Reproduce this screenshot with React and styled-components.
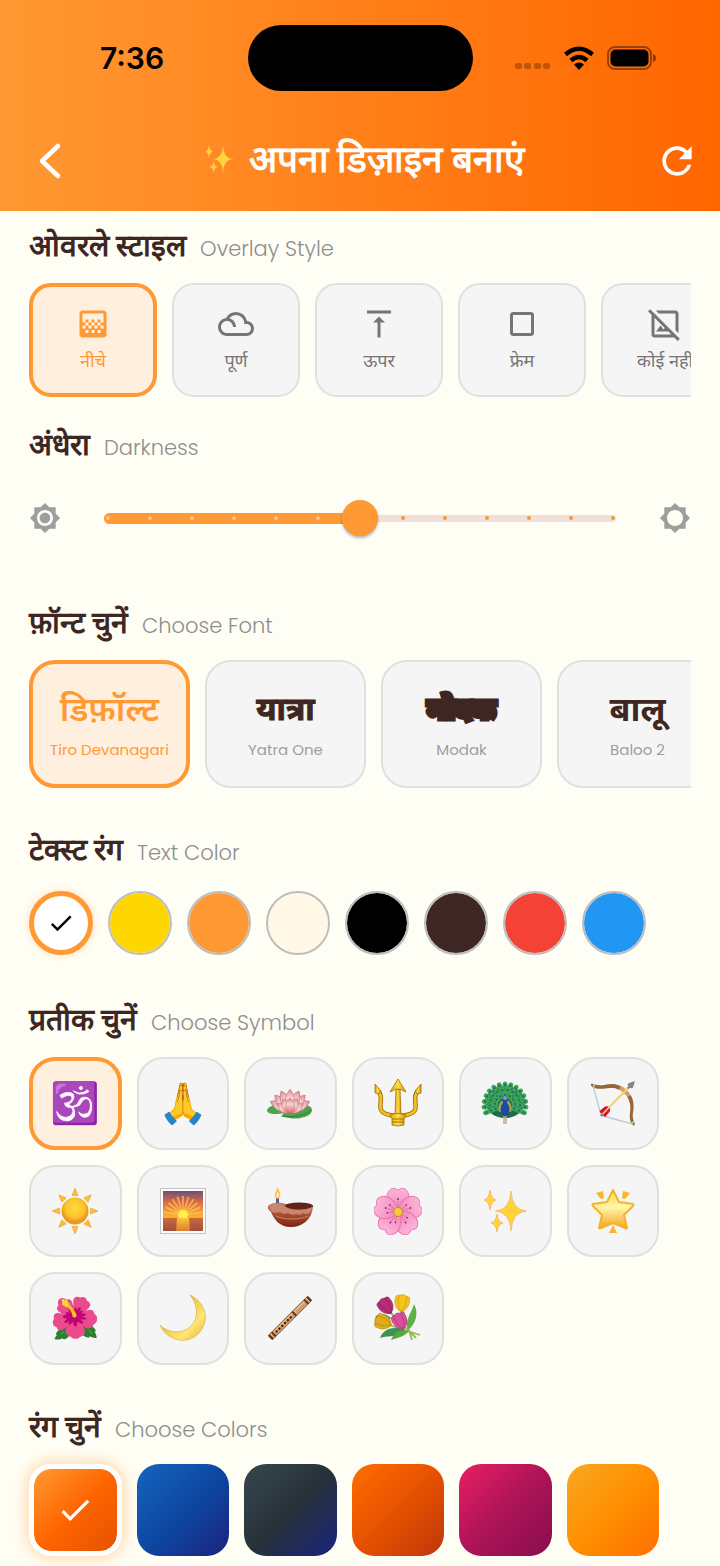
import React, { useState } from "react";
import styled, { createGlobalStyle } from "styled-components";
import {
  MdGradient,
  MdFilterDrama,
  MdVerticalAlignTop,
  MdCropSquare,
  MdOutlineImageNotSupported,
  MdBrightnessHigh,
  MdBrightnessLow,
  MdRefresh,
  MdCheck,
} from "react-icons/md";

const GlobalStyle = createGlobalStyle`
  * {
    box-sizing: border-box;
  }

  body {
    margin: 0;
    background: #fffef5;
    font-family: Poppins, Inter, sans-serif;
  }

  button {
    font: inherit;
    cursor: pointer;
  }
`;

/*///Header///*/
const StyledHeader = styled.header`
  padding: 25px 0 0;
  background: linear-gradient(90deg, #ff9933, #ff6600);
`;

const StatusBar = styled.div`
  display: grid;
  grid-template-columns: 1fr auto 1fr;
  align-items: center;
`;

const Clock = styled.span`
  padding-left: 100px;
  font-family: Inter, sans-serif;
  font-size: 30px;
  font-weight: 600;
  color: #000;
`;

const Island = styled.div`
  width: 225px;
  height: 66px;
  border-radius: 33px;
  background: #000;
`;

const StatusIcons = styled.div`
  display: flex;
  justify-content: flex-end;
  align-items: center;
  gap: 12px;
  padding-right: 63px;
`;

const TitleBar = styled.div`
  display: grid;
  grid-template-columns: 44px 1fr 44px;
  align-items: center;
  height: 120px;
  padding: 20px 21px 0 28px;
`;

const IconButton = styled.button`
  display: flex;
  align-items: center;
  justify-content: center;
  width: 44px;
  height: 44px;
  padding: 0;
  border: none;
  background: none;
  color: #fff;
`;

const Title = styled.h1`
  display: flex;
  align-items: center;
  justify-content: center;
  gap: 14px;
  margin: 0;
  padding-bottom: 4px;
  font-family: Inter, sans-serif;
  font-size: 37px;
  line-height: 48px;
  font-weight: 700;
  color: #fff;
`;

/*///Sections///*/
const StyledMain = styled.main`
  display: flex;
  flex-direction: column;
  padding: 16px 29px 9px;
`;

const Section = styled.section`
  display: flex;
  flex-direction: column;
  gap: ${(p) => p.$gap || 20}px;
  margin-bottom: ${(p) => p.$space || 0}px;
`;

const StyledHeading = styled.h2`
  display: flex;
  align-items: baseline;
  gap: 14px;
  height: 36px;
  margin: 0;
  font-family: Inter, sans-serif;
  font-size: 30px;
  line-height: 36px;
  font-weight: 700;
  color: #3e2723;
`;

const Sub = styled.span`
  font-family: Poppins, Inter, sans-serif;
  font-size: 21px;
  font-weight: 300;
  color: #8e8e8e;
`;

const ScrollRow = styled.div`
  display: flex;
  gap: 15px;
  overflow: hidden;
`;

const Card = styled.button`
  flex: none;
  display: flex;
  flex-direction: column;
  align-items: center;
  justify-content: center;
  padding: 0;
  border: ${(p) => (p.$active ? "4px solid #ff9933" : "2px solid #e0e0e0")};
  background: ${(p) => (p.$active ? "#ffefdf" : "#f5f5f5")};
`;

const OverlayCard = styled(Card)`
  gap: 4px;
  width: 128px;
  height: 114px;
  border-radius: 22px;
  font-family: "Noto Sans", sans-serif;
  font-size: 18px;
  line-height: 28px;
  white-space: nowrap;
  color: ${(p) => (p.$active ? "#ff9933" : "#757575")};
`;

const FontCard = styled(Card)`
  gap: 8px;
  width: 161px;
  height: 128px;
  border-radius: 26px;
`;

const FontSample = styled.span`
  font-family: "Noto Sans", sans-serif;
  font-size: ${(p) => p.$size}px;
  line-height: 44px;
  font-weight: ${(p) => p.$weight};
  -webkit-text-stroke: ${(p) => p.$stroke || 0}px currentColor;
  color: ${(p) => (p.$active ? "#ff9933" : "#3e2723")};
`;

const FontName = styled.span`
  font-size: 15px;
  line-height: 24px;
  font-weight: 400;
  color: ${(p) => (p.$active ? "#ff9933" : "#9e9e9e")};
`;

/*///Slider///*/
const SliderRow = styled.div`
  display: flex;
  align-items: center;
  justify-content: space-between;
  gap: 43px;
  height: 88px;
  color: #9e9e9e;
`;

const SliderBox = styled.div`
  flex: 1;
  display: grid;
  align-items: center;

  > * {
    grid-area: 1 / 1;
  }
`;

const Track = styled.div`
  display: flex;
  align-items: center;
`;

const Filled = styled.div`
  height: 11px;
  border-radius: 6px 0 0 6px;
  background: #ff9933;
`;

const Rest = styled.div`
  flex: 1;
  height: 7px;
  border-radius: 0 4px 4px 0;
  background: #f2e0d7;
`;

const Ticks = styled.div`
  display: flex;
  justify-content: space-between;
  padding: 0 1px 0 2px;
`;

const Tick = styled.i`
  width: 4px;
  height: 4px;
  border-radius: 50%;
  background: ${(p) => (p.$on ? "#ffc58c" : "#f09a3c")};
`;

const Range = styled.input`
  width: 100%;
  height: 48px;
  margin: 0;
  appearance: none;
  background: none;

  &::-webkit-slider-thumb {
    appearance: none;
    width: 36px;
    height: 36px;
    border-radius: 50%;
    background: #ff9933;
    box-shadow: 0 2px 3px rgba(0, 0, 0, 0.3);
  }
`;

/*///Text colour///*/
const Dots = styled.div`
  display: flex;
  gap: 15px;
`;

const Dot = styled.button`
  display: flex;
  align-items: center;
  justify-content: center;
  width: 64px;
  height: 64px;
  padding: 0;
  border: ${(p) => (p.$active ? "5px solid #ff9933" : "2px solid #bdbdbd")};
  border-radius: 50%;
  background: ${(p) => p.$color};
  background-clip: padding-box;
  box-shadow: ${(p) => (p.$active ? "0 0 8px rgba(255, 153, 51, 0.3)" : "none")};
  color: #000;
`;

/*///Symbols and gradients///*/
const TileGrid = styled.div`
  display: grid;
  grid-template-columns: repeat(6, 1fr);
  gap: 15px;
  padding-right: 32px;
`;

const SymbolTile = styled(Card)`
  aspect-ratio: 1;
  border-radius: 26px;
  font-size: 40px;
  line-height: 48px;
`;

const Swatch = styled.button`
  display: flex;
  align-items: center;
  justify-content: center;
  aspect-ratio: 1;
  padding: 0;
  border: ${(p) => (p.$active ? "5px solid #fff" : "none")};
  border-radius: 22px;
  background: linear-gradient(135deg, ${(p) => p.$colors}) padding-box;
  box-shadow: ${(p) => (p.$active ? "0 0 15px 2px rgba(255, 153, 51, 0.4)" : "none")};
  color: #fff;
`;

const around = (n) => Array.from({ length: n }, (_, i) => (i * 360) / n);

const spark = (x, y, rx, ry) =>
  `M${x} ${y - ry}Q${x + 1} ${y - 1} ${x + rx} ${y}Q${x + 1} ${y + 1} ${x} ${y + ry}Q${x - 1} ${y + 1} ${x - rx} ${y}Q${x - 1} ${y - 1} ${x} ${y - ry}Z`;

function Sparkles({ size = 48 }) {
  return (
    <svg width={size} height={size} viewBox="0 0 48 48" fill="#ffd43b" stroke="#f9a65a" strokeWidth="0.7">
      <path d={spark(30, 24, 15.5, 20)} />
      <path d={spark(9, 13, 6, 10)} />
      <path d={spark(16, 36, 6, 9)} />
    </svg>
  );
}

function Lotus() {
  const petal = "M0 0C-7 -6 -6 -16 0 -23C6 -16 7 -6 0 0Z";
  return (
    <svg width="48" height="48" viewBox="0 0 48 48">
      <defs>
        <linearGradient id="petal" x1="0" y1="0" x2="0" y2="1">
          <stop offset="0" stopColor="#d98a90" />
          <stop offset="0.4" stopColor="#f8d5d3" />
          <stop offset="1" stopColor="#e06a74" />
        </linearGradient>
      </defs>
      <path d="M1 31C3 26 14 24 24 25C36 24 46 26 46 31C46 37 36 40 26 39.500L15 37.500L18 34C8 36 1 35 1 31Z" fill="#4fa34a" />
      <path d="M17 37C28 39 41 36 45 31" fill="none" stroke="#2f7d38" />
      <g fill="url(#petal)" stroke="#b9666c" strokeWidth="0.6">
        {[-64, 64, -44, 44, -24, 24, 0].map((a) => (
          <path key={a} d={petal} transform={`translate(24 32) rotate(${a}) scale(.95)`} />
        ))}
        {[-55, 55, -28, 28].map((a) => (
          <path key={a} d={petal} transform={`translate(24 34) rotate(${a}) scale(.8 .7)`} />
        ))}
        <path d={petal} transform="translate(24 34) scale(.9 .65)" />
      </g>
    </svg>
  );
}

function Trident() {
  return (
    <svg width="48" height="48" viewBox="0 0 48 48">
      <defs>
        <linearGradient id="gold" x1="0" y1="0" x2="1" y2="0">
          <stop offset="0" stopColor="#e3a50b" />
          <stop offset="0.5" stopColor="#ffdc45" />
          <stop offset="1" stopColor="#d0920a" />
        </linearGradient>
      </defs>
      <path d="M3 11C14 20 -4 33 18 36.500H30C52 33 34 20 45 11" fill="none" stroke="#a46d05" strokeWidth="4.500" />
      <path d="M3 11C14 20 -4 33 18 36.500H30C52 33 34 20 45 11" fill="none" stroke="#f2bf22" strokeWidth="2.800" />
      <g fill="url(#gold)" stroke="#a46d05" strokeWidth="0.8">
        <path d="M22 10H26L27 36H21Z" />
        <path d="M24 0L32 13Q27 10 24 10Q21 10 16 13Z" />
        <path d="M1 5L7 12L5 15L1 14Z" />
        <path d="M47 5L41 12L43 15L47 14Z" />
        <path d="M16 36C22 34 26 34 32 36L30 40V46Q24 48 18 46V40Z" />
      </g>
      <path d="M18 40H30M18 43H30" stroke="#a46d05" />
    </svg>
  );
}

function Peacock() {
  return (
    <svg width="48" height="48" viewBox="0 0 48 48">
      <ellipse cx="24" cy="23" rx="20" ry="16" fill="#1f6b4f" />
      {[
        [20, 15],
        [15, 12],
        [10, 9],
      ].map(([r, n]) =>
        Array.from({ length: n }, (_, i) => {
          const a = -112 + (i * 224) / (n - 1);
          return (
            <g key={`${r}-${i}`} transform={`translate(24 26) rotate(${a}) translate(0 ${-r})`}>
              <ellipse rx="2.500" ry="3.500" fill="#3fa653" />
              <circle r="1.200" fill="#176b7c" />
            </g>
          );
        })
      )}
      <path d="M20 22Q16 28 18 33H30Q32 28 28 22Z" fill="#a3a83d" />
      <path d="M24 17C27 17 27 20 26 24C30 29 29 36 24 37C19 36 18 29 22 24C21 20 21 17 24 17Z" fill="#1f48a8" />
      <circle cx="24" cy="19" r="2" fill="#7fa3b8" />
      <path d="M23 37V45M25 37V45" stroke="#c9a688" strokeWidth="1.500" />
    </svg>
  );
}

function Sun() {
  return (
    <svg width="48" height="48" viewBox="0 0 48 48">
      <defs>
        <radialGradient id="sun" cx="0.5" cy="0.4">
          <stop offset="0" stopColor="#ffd93b" />
          <stop offset="0.7" stopColor="#fcc42c" />
          <stop offset="1" stopColor="#e9981d" />
        </radialGradient>
      </defs>
      <circle cx="24" cy="24" r="13.500" fill="url(#sun)" />
      {around(8).map((a) => (
        <path key={a} d="M24 1L27 8.500H21Z" fill="#fbbf2f" stroke="#e5a030" strokeWidth="0.6" transform={`rotate(${a} 24 24)`} />
      ))}
    </svg>
  );
}

function Sunrise() {
  return (
    <svg width="48" height="48" viewBox="0 0 48 48">
      <defs>
        <linearGradient id="sky" x1="0" y1="0" x2="0" y2="1">
          <stop offset="0" stopColor="#6b4f78" />
          <stop offset="0.3" stopColor="#e26d45" />
          <stop offset="0.66" stopColor="#ffb52c" />
          <stop offset="0.68" stopColor="#c9683c" />
          <stop offset="1" stopColor="#a04f3f" />
        </linearGradient>
        <linearGradient id="glow" x1="0" y1="0" x2="0" y2="1">
          <stop offset="0" stopColor="#ffc53a" />
          <stop offset="1" stopColor="#dd7a33" />
        </linearGradient>
      </defs>
      <rect x="1.500" y="1.500" width="45" height="45" fill="#fff" stroke="#c4c4c4" />
      <rect x="4" y="4" width="40" height="40" fill="url(#sky)" />
      {[-82, -66, -50, -34, -17, 0, 17, 34, 50, 66, 82].map((a) => (
        <path key={a} d="M23.500 28L23 9H25L24.500 28Z" fill="#ffd65a" opacity="0.6" transform={`rotate(${a} 24 28)`} />
      ))}
      <circle cx="24" cy="28" r="5" fill="#fff04d" />
      <path d="M4 31H44V34H4Z" fill="#c9683c" opacity="0.8" />
      <path d="M18 31H30L31 44H17Z" fill="url(#glow)" />
    </svg>
  );
}

function Diya() {
  return (
    <svg width="48" height="48" viewBox="0 0 48 48">
      <defs>
        <linearGradient id="clay" x1="0" y1="0" x2="0" y2="1">
          <stop offset="0" stopColor="#c47a5e" />
          <stop offset="0.5" stopColor="#a84b32" />
          <stop offset="1" stopColor="#7e2412" />
        </linearGradient>
      </defs>
      <path d="M2 19C6 15 14 15 20 17L47 19C46 33 36 40 25 40C13 40 8 32 5 25Q1 22 2 19Z" fill="url(#clay)" />
      <ellipse cx="33" cy="19" rx="14" ry="3.500" fill="#5f2415" />
      <path d="M3 19C9 14 16 17 20 20C25 24 39 24 46 20Q46 25 43 26Q40 28 37 26Q34 29 30 27Q26 29 22 26Q17 28 14 25Q8 27 5 24Z" fill="#c98570" />
      <path d="M10 29C18 33 34 33 42 29" fill="none" stroke="#d79a84" strokeWidth="0.8" />
      <path d="M10 10H13L13 16H10Z" fill="#5d5a8a" />
      <path d="M11.500 0C14 5 15 7 14 10C13 12 10 12 9 10C8 7 10 5 11.500 0Z" fill="#ffc34d" />
      <path d="M11.500 5C13 8 13 9 11.500 11C10 9 10 8 11.500 5Z" fill="#fff3c2" />
    </svg>
  );
}

function Blossom() {
  return (
    <svg width="48" height="48" viewBox="0 0 48 48">
      <defs>
        <linearGradient id="pink" x1="0" y1="0" x2="0" y2="1">
          <stop offset="0" stopColor="#fdb5da" />
          <stop offset="1" stopColor="#f283bb" />
        </linearGradient>
      </defs>
      {around(5).map((a) => (
        <g key={a} transform={`rotate(${a} 24 25)`}>
          <path d="M24 26C15 20 12 8 18 2Q21 0 24 3Q27 0 30 2C36 8 33 20 24 26Z" fill="url(#pink)" stroke="#e675ad" strokeWidth="0.8" transform="translate(24 0) scale(1.2 1) translate(-24 0)" />
          <path d="M24 24V13M24 24L20 15M24 24L28 15" stroke="#e069a3" strokeWidth="0.8" />
          <circle cx="24" cy="12" r="0.9" fill="#7d2b3c" />
          <circle cx="20" cy="15" r="0.8" fill="#7d2b3c" />
          <circle cx="28" cy="15" r="0.8" fill="#7d2b3c" />
        </g>
      ))}
      <circle cx="24" cy="25" r="4.500" fill="#f5c83f" stroke="#c98a20" />
    </svg>
  );
}

function GlowingStar() {
  return (
    <svg width="48" height="48" viewBox="0 0 48 48">
      <defs>
        <linearGradient id="star" x1="0" y1="0" x2="0" y2="1">
          <stop offset="0" stopColor="#ffd84a" />
          <stop offset="0.45" stopColor="#fff6a8" />
          <stop offset="1" stopColor="#f8a21b" />
        </linearGradient>
      </defs>
      <path d="M24 3L30 15L44 17Q45 18 44 19L35 28L38 41Q37 42 36 41L24 36L12 41Q11 42 10 41L13 28L4 19Q3 18 4 17L18 15Z" fill="url(#star)" stroke="#f5b32c" strokeWidth="2" strokeLinejoin="round" />
      <path d="M7 6L14 4L15 11Q13 13 11 11ZM41 6L34 4L33 11Q35 13 37 11ZM24 38L28 46H20Z" fill="#f9b52b" />
    </svg>
  );
}

function Moon() {
  return (
    <svg width="48" height="48" viewBox="0 0 48 48">
      <defs>
        <linearGradient id="moon" x1="0" y1="0" x2="1" y2="1">
          <stop offset="0.4" stopColor="#f0c544" />
          <stop offset="0.7" stopColor="#ffe676" />
          <stop offset="1" stopColor="#e5b02f" />
        </linearGradient>
      </defs>
      <path d="M31 1C42 6 48 17 46 27C43 41 31 48 20 46C10 44 4 38 1 31C9 39 23 41 32 32C40 24 39 11 31 1Z" fill="url(#moon)" stroke="#d9a634" strokeWidth="0.6" />
    </svg>
  );
}

function Flute() {
  return (
    <svg width="48" height="48" viewBox="0 0 48 48">
      <g transform="rotate(-45 24 24)">
        <rect x="-4" y="21" width="56" height="6" rx="2" fill="#cf9d68" stroke="#7b4a2b" strokeWidth="0.8" />
        <path d="M-2 22.500H50" stroke="#eccb9b" />
        <path d="M-3 21V27M1 21V27M30 21V27M47 21V27M51 21V27" stroke="#62301f" strokeWidth="2" />
        {[5, 9, 13, 17, 21, 25].map((x) => (
          <circle key={x} cx={x} cy="24" r="1.200" fill="#3d1b12" />
        ))}
      </g>
    </svg>
  );
}

function Tulip({ x, y, turn, fill, edge }) {
  return (
    <g transform={`translate(${x} ${y}) rotate(${turn})`} fill={fill} stroke={edge} strokeWidth="0.5">
      <path d="M-7 -6Q-4 -9 0 -6Q4 -9 7 -6Q9 5 0 9Q-9 5 -7 -6Z" />
      <path d="M-4 -6Q0 -11 4 -6Q5 2 0 9Q-5 2 -4 -6Z" />
    </g>
  );
}

function Bouquet() {
  return (
    <svg width="48" height="48" viewBox="0 0 48 48">
      <path d="M13 15L42 44M28 14L38 46M12 30L46 41" stroke="#8fbf4a" strokeWidth="1.800" />
      <path d="M40 10C45 19 42 30 34 36C31 26 36 22 40 10Z" fill="#5cb246" />
      <path d="M6 44C10 34 20 32 31 36C24 44 16 41 6 44Z" fill="#3b9350" />
      <path d="M17 46C20 38 27 35 35 37C30 43 25 43 17 46Z" fill="#57a845" />
      <path d="M1 23C6 18 12 20 17 24L12 29Z" fill="#4f9f50" />
      <Tulip x={12} y={12} turn={-35} fill="#b82d78" edge="#7e1751" />
      <Tulip x={28} y={9} turn={8} fill="#f3c51d" edge="#c48d10" />
      <Tulip x={9} y={28} turn={-70} fill="#e0ae1a" edge="#aa7811" />
      <Tulip x={26} y={27} turn={-25} fill="#d94f9c" edge="#9f2e70" />
    </svg>
  );
}

const overlays = [
  { label: "नीचे", Icon: MdGradient },
  { label: "पूर्ण", Icon: MdFilterDrama },
  { label: "ऊपर", Icon: MdVerticalAlignTop },
  { label: "फ्रेम", Icon: MdCropSquare },
  { label: "कोई नहीं", Icon: MdOutlineImageNotSupported },
];

const fonts = [
  { sample: "डिफ़ॉल्ट", name: "Tiro Devanagari", size: 34, weight: 600 },
  { sample: "यात्रा", name: "Yatra One", size: 32, weight: 700, stroke: 1 },
  { sample: "मोदक", name: "Modak", size: 28, weight: 900, stroke: 5 },
  { sample: "बालू", name: "Baloo 2", size: 34, weight: 700 },
];

const textColors = [
  { name: "White", color: "#ffffff" },
  { name: "Gold", color: "#ffd700" },
  { name: "Saffron", color: "#ff9933" },
  { name: "Cream", color: "#fff8e7" },
  { name: "Black", color: "#000000" },
  { name: "Brown", color: "#3e2723" },
  { name: "Red", color: "#f44336" },
  { name: "Blue", color: "#2196f3" },
];

const symbols = [
  { name: "Om", art: "🕉️" },
  { name: "Folded hands", art: "🙏" },
  { name: "Lotus", art: <Lotus /> },
  { name: "Trident", art: <Trident /> },
  { name: "Peacock", art: <Peacock /> },
  { name: "Bow and arrow", art: "🏹" },
  { name: "Sun", art: <Sun /> },
  { name: "Sunrise", art: <Sunrise /> },
  { name: "Diya", art: <Diya /> },
  { name: "Blossom", art: <Blossom /> },
  { name: "Sparkles", art: <Sparkles /> },
  { name: "Glowing star", art: <GlowingStar /> },
  { name: "Hibiscus", art: "🌺" },
  { name: "Moon", art: <Moon /> },
  { name: "Flute", art: <Flute /> },
  { name: "Bouquet", art: <Bouquet /> },
];

const gradients = [
  { name: "Saffron", colors: "#ff9933, #ff6600, #e65100" },
  { name: "Blue", colors: "#1565c0, #0d47a1, #1a237e" },
  { name: "Night", colors: "#37474f, #263238 50%, #1a237e" },
  { name: "Orange", colors: "#ff6f00, #e65100, #bf360c" },
  { name: "Pink", colors: "#e91e63, #ad1457, #880e4f" },
  { name: "Amber", colors: "#f9a825, #ff8f00, #ff6f00" },
];

function Heading({ hindi, english }) {
  return (
    <StyledHeading>
      {hindi}
      <Sub>{english}</Sub>
    </StyledHeading>
  );
}

export default function App() {
  const [overlay, setOverlay] = useState(0);
  const [darkness, setDarkness] = useState(6);
  const [font, setFont] = useState(0);
  const [textColor, setTextColor] = useState(0);
  const [symbol, setSymbol] = useState(0);
  const [gradient, setGradient] = useState(0);

  return (
    <>
      <GlobalStyle />
      <StyledHeader>
        <StatusBar>
          <Clock>7:36</Clock>
          <Island />
          <StatusIcons>
            <svg width="36" height="24" viewBox="0 0 36 24" fill="#000" opacity="0.25">
              {[0, 9, 19, 28].map((x) => (
                <rect key={x} x={x} y="17" width="7" height="6" rx="2" />
              ))}
            </svg>
            <svg width="32" height="24" viewBox="0 0 32 24" fill="none" stroke="#000" strokeWidth="4.500">
              <path d="M2.500 8.500Q16 -3 29.500 8.500" />
              <path d="M8 14.500Q16 7.500 24 14.500" />
              <path d="M11 18.500Q16 14.500 21 18.500L16 24Z" fill="#000" stroke="none" />
            </svg>
            <svg width="50" height="24" viewBox="0 0 50 24">
              <rect x="1" y="1" width="43" height="22" rx="7" fill="none" stroke="#000" strokeOpacity="0.4" strokeWidth="2" />
              <rect x="3.500" y="3.500" width="38" height="17" rx="5" fill="#000" />
              <path d="M46 8Q49 9 49 12Q49 15 46 16Z" fill="#000" opacity="0.45" />
            </svg>
          </StatusIcons>
        </StatusBar>
        <TitleBar>
          <IconButton aria-label="Back">
            <svg width="44" height="44" viewBox="0 0 44 44" fill="none" stroke="#fff" strokeWidth="4.500" strokeLinecap="round" strokeLinejoin="round">
              <path d="M30 7L14 22L30 37" />
            </svg>
          </IconButton>
          <Title>
            <Sparkles size={32} />
            अपना डिज़ाइन बनाएं
          </Title>
          <IconButton aria-label="Reset">
            <MdRefresh size={44} />
          </IconButton>
        </TitleBar>
      </StyledHeader>

      <StyledMain>
        <Section $space={29}>
          <Heading hindi="ओवरले स्टाइल" english="Overlay Style" />
          <ScrollRow>
            {overlays.map(({ label, Icon }, i) => (
              <OverlayCard key={label} $active={i === overlay} aria-pressed={i === overlay} onClick={() => setOverlay(i)}>
                <Icon size={36} />
                {label}
              </OverlayCard>
            ))}
          </ScrollRow>
        </Section>

        <Section $gap={12} $space={42}>
          <Heading hindi="अंधेरा" english="Darkness" />
          <SliderRow>
            <MdBrightnessHigh size={32} />
            <SliderBox>
              <Track>
                <Filled style={{ width: `${(darkness / 12) * 100}%` }} />
                <Rest />
              </Track>
              <Ticks>
                {Array.from({ length: 13 }, (_, i) => (
                  <Tick key={i} $on={i <= darkness} />
                ))}
              </Ticks>
              <Range
                type="range"
                min="0"
                max="12"
                aria-label="Darkness"
                value={darkness}
                onChange={(evt) => setDarkness(Number(evt.target.value))}
              />
            </SliderBox>
            <MdBrightnessLow size={32} />
          </SliderRow>
        </Section>

        <Section $space={43}>
          <Heading hindi="फ़ॉन्ट चुनें" english="Choose Font" />
          <ScrollRow>
            {fonts.map((f, i) => (
              <FontCard key={f.name} $active={i === font} aria-pressed={i === font} onClick={() => setFont(i)}>
                <FontSample $active={i === font} $size={f.size} $weight={f.weight} $stroke={f.stroke}>
                  {f.sample}
                </FontSample>
                <FontName $active={i === font}>{f.name}</FontName>
              </FontCard>
            ))}
          </ScrollRow>
        </Section>

        <Section $gap={24} $space={46}>
          <Heading hindi="टेक्स्ट रंग" english="Text Color" />
          <Dots>
            {textColors.map((c, i) => (
              <Dot
                key={c.name}
                $color={c.color}
                $active={i === textColor}
                aria-label={c.name}
                aria-pressed={i === textColor}
                onClick={() => setTextColor(i)}
              >
                {i === textColor && <MdCheck size={28} />}
              </Dot>
            ))}
          </Dots>
        </Section>

        <Section $space={43}>
          <Heading hindi="प्रतीक चुनें" english="Choose Symbol" />
          <TileGrid>
            {symbols.map((s, i) => (
              <SymbolTile key={s.name} $active={i === symbol} aria-label={s.name} aria-pressed={i === symbol} onClick={() => setSymbol(i)}>
                {s.art}
              </SymbolTile>
            ))}
          </TileGrid>
        </Section>

        <Section>
          <Heading hindi="रंग चुनें" english="Choose Colors" />
          <TileGrid>
            {gradients.map((g, i) => (
              <Swatch
                key={g.name}
                $colors={g.colors}
                $active={i === gradient}
                aria-label={g.name}
                aria-pressed={i === gradient}
                onClick={() => setGradient(i)}
              >
                {i === gradient && <MdCheck size={38} />}
              </Swatch>
            ))}
          </TileGrid>
        </Section>
      </StyledMain>
    </>
  );
}
